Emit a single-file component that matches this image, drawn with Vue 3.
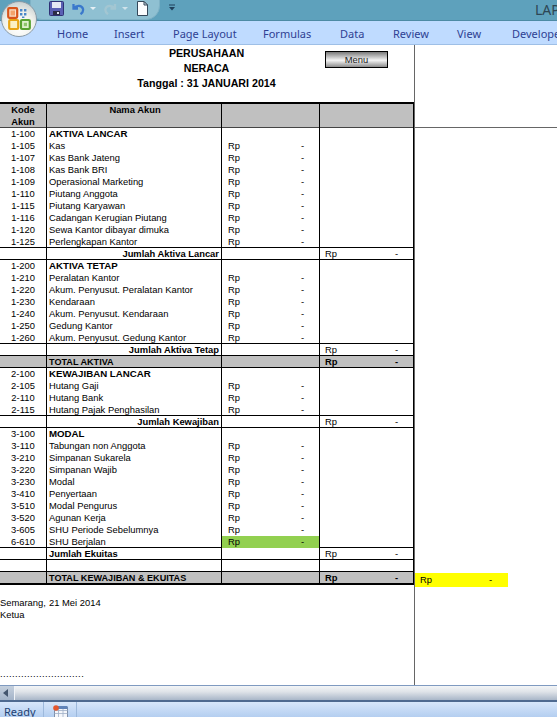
<script setup>
const tabs = ['Home','Insert','Page Layout','Formulas','Data','Review','View','Developer']
const R = (kode, nama) => ({ kode, nama, type: 'item' })
const H = (kode, nama) => ({ kode, nama, type: 'head' })
const S = (nama) => ({ nama, type: 'sum' })
const base = [
  H('1-100','AKTIVA LANCAR'),R('1-105','Kas'),R('1-107','Kas Bank Jateng'),R('1-108','Kas Bank BRI'),
  R('1-109','Operasional Marketing'),R('1-110','Piutang Anggota'),R('1-115','Piutang Karyawan'),
  R('1-116','Cadangan Kerugian Piutang'),R('1-120','Sewa Kantor dibayar dimuka'),R('1-125','Perlengkapan Kantor'),
  S('Jumlah Aktiva Lancar'),
  H('1-200','AKTIVA TETAP'),R('1-210','Peralatan Kantor'),R('1-220','Akum. Penyusut. Peralatan Kantor'),
  R('1-230','Kendaraan'),R('1-240','Akum. Penyusut. Kendaraan'),R('1-250','Gedung Kantor'),R('1-260','Akum. Penyusut. Gedung Kantor'),
  S('Jumlah Aktiva Tetap'),
  { nama:'TOTAL AKTIVA', type:'total' },
  H('2-100','KEWAJIBAN LANCAR'),R('2-105','Hutang Gaji'),R('2-110','Hutang Bank'),R('2-115','Hutang Pajak Penghasilan'),
  S('Jumlah Kewajiban'),
  H('3-100','MODAL'),R('3-110','Tabungan non Anggota'),R('3-210','Simpanan Sukarela'),R('3-220','Simpanan Wajib'),
  R('3-230','Modal'),R('3-410','Penyertaan'),R('3-510','Modal Pengurus'),R('3-520','Agunan Kerja'),
  R('3-605','SHU Periode Sebelumnya'),{ kode:'6-610', nama:'SHU Berjalan', type:'item', green:true },
  { nama:'Jumlah Ekuitas', type:'sum', left:true },
  { type:'blank' },
  { nama:'TOTAL KEWAJIBAN & EKUITAS', type:'total', last:true },
]
const lined = ['sum', 'total', 'blank']
const rows = base.map((r, i) => {
  const next = base[i + 1]
  return { ...r, ruled: lined.includes(r.type) || (next && lined.includes(next.type)) }
})
</script>

<template>
  <div class="app">
    <header class="titlebar">
      <div class="qat">
        <svg class="qi" width="15" height="15" viewBox="0 0 15 15"><rect x=".5" y=".5" width="14" height="14" rx="1" fill="#5a5fb4" stroke="#2f3175"/><rect x="3" y="1" width="9" height="6" fill="#e6e8f4"/><rect x="4" y="10" width="7" height="4" fill="#2b2b45"/><rect x="8" y="11" width="2" height="2" fill="#dfe3f2"/></svg>
        <svg class="qi2" width="13" height="12" viewBox="0 0 13 12"><path d="M1.500 1v4.500H6M2 5C4.500 2 10 2 11 6c.5 2.200-.8 4-2.500 5.200" fill="none" stroke="#3a78cc" stroke-width="2.300"/></svg>
        <i class="caret"></i>
        <svg class="qi3" width="14" height="12" viewBox="0 0 13 12"><path d="M11.500 1v4.500H7M11 5C8.500 2 3 2 2 6c-.5 2.200.8 4 2.500 5.200" fill="none" stroke="#a3c6d2" stroke-width="2.300"/></svg>
        <i class="caret dim"></i>
        <svg class="qi4" width="11" height="15" viewBox="0 0 11 15"><path d="M.5.500h6.500l3.500 3.500v10.500H.5z" fill="#fbfcfe" stroke="#34485a"/><path d="M7 .5V4h3.500z" fill="#cfd9e3" stroke="#34485a"/></svg>
      </div>
      <svg class="more" width="6" height="7" viewBox="0 0 6 7"><path d="M0 1h6" stroke="#20415c" stroke-width="1"/><path d="M0 3h6L3 6.500z" fill="#20415c"/></svg>
      <span class="doc">LAP</span>
    </header>

    <nav class="ribbon">
      <span v-for="t in tabs" :key="t" class="tab">{{ t }}</span>
    </nav>

    <button class="office" aria-label="Office">
      <svg width="24" height="24" viewBox="0 0 24 24">
        <rect x="1.200" y="1.200" width="9" height="9.600" rx="1" fill="#fbe2cb" stroke="#d8541a" stroke-width="2.200"/>
        <rect x="3.500" y="3.500" width="4.500" height="5" fill="#f4a36b"/>
        <path d="M13 2h2.400v2.400H13zM17 2h2.400v2.400H17zM13 6h2.400v2.400H13zM17 6h2.400v2.400H17zM15 9.500h2.400v1.500H15z" fill="#4a86c8"/>
        <rect x="2.200" y="13" width="9" height="9" rx="1" fill="#fbf0c4" stroke="#e8a414" stroke-width="2.200"/>
        <rect x="14" y="13" width="8.800" height="9" rx="1" fill="#dff0cf" stroke="#57a231" stroke-width="2.200"/>
        <rect x="16.800" y="15.800" width="3.200" height="3.400" fill="#8cc56b"/>
      </svg>
    </button>

    <main class="sheet">
      <div class="heading">
        <div>PERUSAHAAN</div>
        <div>NERACA</div>
        <div>Tanggal : 31 JANUARI 2014</div>
        <button class="menu">Menu</button>
      </div>

      <section class="table">
        <div class="row thead">
          <div class="c a">Kode<br>Akun</div>
          <div class="c b">Nama Akun</div>
          <div class="c cc"></div>
          <div class="c d"></div>
        </div>
        <div v-for="(r, i) in rows" :key="i" class="row" :class="[r.type, { last: r.last, ruled: r.ruled }]">
          <div class="c a">{{ r.kode }}</div>
          <div class="c b" :class="{ toleft: r.left }">{{ r.nama }}</div>
          <div class="c cc" :class="{ green: r.green }">
            <template v-if="r.type === 'item'"><span>Rp</span><span class="dash">-</span></template>
          </div>
          <div class="c d">
            <template v-if="r.type === 'sum' || r.type === 'total'"><span>Rp</span><span class="dash">-</span></template>
          </div>
        </div>
        <div class="yellow"><span>Rp</span><span class="dash">-</span></div>
      </section>

      <footer class="sign">
        <div class="city"><span>Semarang,</span><span>21 Mei 2014</span></div>
        <div>Ketua</div>
        <div class="dots">............................</div>
      </footer>
      <div class="freeze"></div>
    </main>

    <div class="scroll">
      <div class="arrow"><i></i></div>
      <div class="track"></div>
    </div>

    <footer class="status">
      <span class="ready">Ready</span>
      <span class="macro">
        <svg width="15" height="12" viewBox="0 0 15 12"><rect x="1.500" y="2.500" width="13" height="10" fill="#f4f6fa" stroke="#7f8fa8"/><path d="M1.500 5.500h13M1.500 8.500h13M5.500 2.500v10M10 2.500v10" stroke="#9fb0c8" stroke-width=".8"/><rect x="4" y="1" width="10.500" height="3" fill="#5f83b8"/><circle cx="3" cy="3" r="2.800" fill="#e4572e"/></svg>
      </span>
    </footer>
  </div>
</template>

<style>
html, body { margin: 0; background: #fff; }
</style>

<style scoped>
.app { width: 557px; height: 717px; overflow: hidden; position: relative; display: flex; flex-direction: column; font-family: "Liberation Sans", Arial, sans-serif; color: #000; background: #fff; }

.titlebar { height: 21px; box-sizing: border-box; flex: none; background: #5ea1bc; border-bottom: 1px solid #4d8aa4; position: relative; }
.qat { position: absolute; left: 30px; top: -4px; width: 130px; height: 24px; box-sizing: border-box; border: 1px solid #7fb2c6; border-radius: 0 0 14px 12px; background: #8fc0d2; }
.qi { position: absolute; left: 18px; top: 4px; }
.qi2 { position: absolute; left: 41px; top: 6px; }
.qi3 { position: absolute; left: 72px; top: 6px; }
.qi4 { position: absolute; left: 106px; top: 4px; }
.caret { position: absolute; left: 59px; top: 10px; border: 3px solid transparent; border-top: 3px solid #e6eff4; }
.caret.dim { left: 91px; border-top-color: #cfe2ea; }
.more { position: absolute; left: 169px; top: 4px; }
.doc { position: absolute; left: 535px; top: 0; font: 14px/19px "Noto Sans", sans-serif; color: #2d4654; white-space: nowrap; }

.ribbon { height: 24px; flex: none; background: #bfdbff; border-bottom: 1px solid #9ebfe6; box-sizing: border-box; position: relative; }
.tab { position: absolute; top: 6px; font: 11px/14px "Noto Sans", sans-serif; color: #2e3f93; white-space: nowrap; }
.tab:nth-child(1) { left: 57px; }
.tab:nth-child(2) { left: 114px; }
.tab:nth-child(3) { left: 173px; }
.tab:nth-child(4) { left: 263px; }
.tab:nth-child(5) { left: 340px; }
.tab:nth-child(6) { left: 393px; }
.tab:nth-child(7) { left: 457px; }
.tab:nth-child(8) { left: 512px; }

.office { position: absolute; left: 1px; top: 1px; width: 36px; height: 36px; padding: 0; box-sizing: border-box; border: 1px solid #8a9aa6; border-radius: 50%; background: radial-gradient(circle at 50% 75%, #ffffff 0, #f0f1ec 50%, #b7c1c4 100%); display: flex; align-items: center; justify-content: center; }

.sheet { flex: none; height: 640px; position: relative; font-size: 9.4px; }
.heading { height: 57px; box-sizing: border-box; padding-top: 1px; width: 413px; position: relative; }
.heading div { text-align: center; font-size: 10.67px; font-weight: bold; height: 15px; line-height: 15px; }
.menu { position: absolute; left: 325px; top: 6px; width: 63px; height: 17px; padding: 0; box-sizing: border-box; border: 1px solid #000; background: linear-gradient(#7a7a7a, #f4f4f4 55%, #8c8c8c); font: 9.4px "Liberation Sans", sans-serif; color: #222; }

.table { width: 415px; box-sizing: border-box; border-top: 2px solid #000; position: relative; }
.row { display: grid; grid-template-columns: 47px 175px 98px 95px; height: 12px; box-sizing: border-box; line-height: 12px; }
.ruled { border-bottom: 1px solid #000; }
.c { box-sizing: border-box; border-right: 1px solid #000; white-space: pre; }
.c.a { text-align: center; }
.c.b { padding-left: 2px; overflow: hidden; }
.c.cc { display: flex; justify-content: space-between; padding: 0 15px 0 6px; }
.c.d { border-right-width: 2px; display: flex; justify-content: space-between; padding: 0 15px 0 5px; }
.thead { height: 24px; background: #c0c0c0; border-bottom: 1px solid #444; font-weight: bold; }
.thead .c.b { text-align: center; }

.head .b { font-weight: bold; font-size: 9.7px; }
.sum .b { font-weight: bold; text-align: right; padding-right: 2px; }
.sum .b.toleft { text-align: left; padding-left: 2px; }
.total { background: #c0c0c0; }
.total .b { font-weight: bold; font-size: 9.1px; }
.total .d { font-weight: bold; }
.last { border-bottom-width: 2px; height: 13px; }
.green { background: #92d050; }

.yellow { position: absolute; left: 415px; top: 469px; width: 93px; height: 14px; box-sizing: border-box; padding: 0 16px 0 5px; background: #ffff00; display: flex; justify-content: space-between; line-height: 14px; }

.sign { margin-top: 12px; line-height: 12px; }
.city { display: flex; }
.city span:first-child { width: 49px; }
.dots { margin-top: 47px; letter-spacing: .4px; }
.freeze { position: absolute; left: 414px; top: 0; bottom: 0; width: 1px; background: #666; }
.freeze::after { content: ""; position: absolute; left: 0; top: 82px; width: 143px; height: 1px; background: #666; }

.scroll { flex: none; height: 17px; display: flex; background: #dbe2ea; border-top: 1px solid #7f9ac0; border-bottom: 2px solid #4e6a90; box-sizing: border-box; }
.arrow { width: 14px; background: linear-gradient(#c5d0dd, #a3b3c8); display: flex; align-items: center; justify-content: center; border-right: 1px solid #f0f3f7; }
.arrow i { border: 4px solid transparent; border-right: 5px solid #44566e; border-left: 0; margin-right: 3px; }
.track { flex: 1; background: linear-gradient(#f3f5f7, #e0e4e9 40%, #a9b6c8); }

.status { flex: 1; min-height: 0; overflow: hidden; background: linear-gradient(#d7e7fb, #b4cef0); display: flex; align-items: stretch; font: 11px/11px "Noto Sans", sans-serif; color: #1d3f72; }
.ready { width: 44px; box-sizing: border-box; padding: 4px 0 0 4px; border-right: 1px solid #9db9dc; }
.macro { width: 33px; box-sizing: border-box; padding-top: 3px; display: flex; justify-content: center; border-right: 1px solid #9db9dc; }
</style>
